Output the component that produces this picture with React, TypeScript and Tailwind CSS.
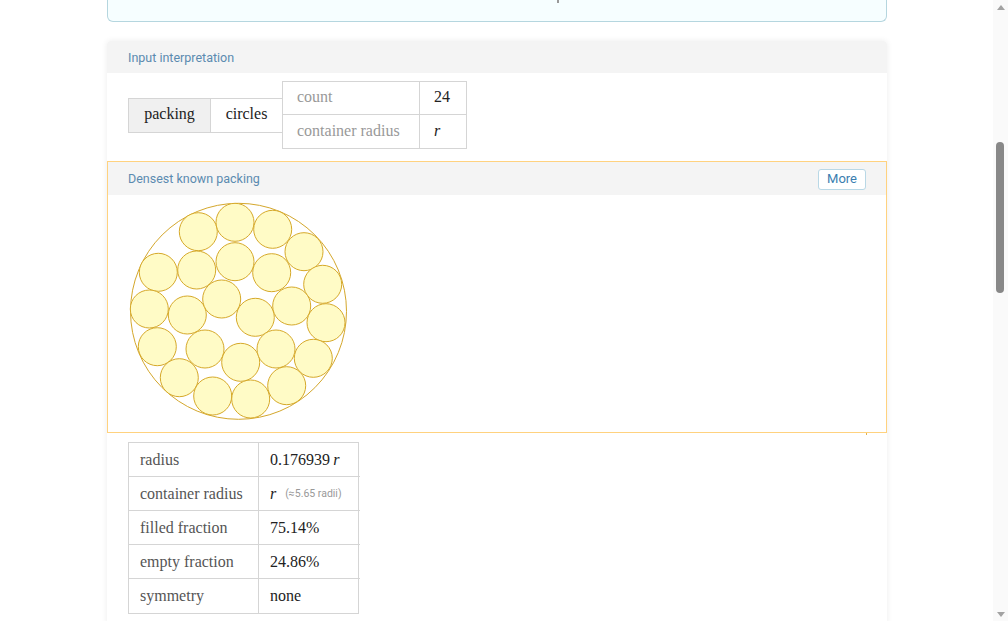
import React from "react";

const circles: [number, number][] = [
  [198.3, 231.7], [235, 222.3], [272.7, 229.3], [304, 251.7],
  [158.3, 272.3], [196.7, 270], [235, 261.7], [271.7, 272.7], [322.7, 284.3],
  [149.3, 309], [187.3, 315], [221.7, 299], [255.3, 317.3], [291.7, 306], [326, 322.7],
  [157.3, 346.7], [205, 349], [240.7, 362.3], [276, 349], [313.3, 358.3],
  [179.3, 377.7], [212.7, 396], [250.7, 399], [286.7, 385.7],
];

const serif = { fontFamily: '"Liberation Serif", "Times New Roman", serif' };

function Packing() {
  const ox = 128;
  const oy = 198;
  return (
    <svg width="230" height="228" viewBox="0 0 230 228" className="block">
      <circle cx={238.5 - ox} cy={311.3 - oy} r={108} fill="none" stroke="#d4a72c" strokeWidth="1" />
      {circles.map(([x, y], i) => (
        <circle key={i} cx={x - ox} cy={y - oy} r={19} fill="#fffbc6" stroke="#d6a92a" strokeWidth="1" />
      ))}
    </svg>
  );
}

export default function App() {
  return (
    <div className="w-[1008px] h-[621px] overflow-hidden flex bg-white" style={{ fontFamily: 'Roboto, "Liberation Sans", sans-serif' }}>
      <div className="w-[993px] h-full">
        <div className="ml-[107px] w-[780px]">
          <div className="h-[22px] bg-[#f6feff] border-x border-b border-[#b5d6df] rounded-b-[6px] relative">
            <div className="absolute left-[449px] top-0 w-[2px] h-[3px] bg-[#999]" />
          </div>
          <div className="mt-[19px] bg-white shadow-[0_0_6px_rgba(0,0,0,0.08)] rounded-t-[4px]">
            <div className="h-[32px] bg-[#f4f4f4] flex items-center pt-[3px] px-[21px] text-[12.5px] text-[#5b8bb0] rounded-t-[4px]">
              Input interpretation
            </div>
            <div className="h-[88px] pt-[8px] pl-[21px] text-[16px] text-[#222]" style={serif}>
              <div className="flex items-center">
                <div className="h-[35px] w-[83px] pb-[2px] flex items-center justify-center bg-[#f0f0f0] border border-[#d5d5d5]">packing</div>
                <div className="h-[35px] w-[71px] pb-[2px] flex items-center justify-center border-y border-[#d5d5d5]">circles</div>
                <div className="grid grid-cols-[137px_46px] border border-[#d5d5d5]">
                  <div className="h-[33px] pb-[2px] flex items-center pl-[14px] text-[#999] border-r border-b border-[#d5d5d5]">count</div>
                  <div className="h-[33px] pb-[2px] flex items-center pl-[14px] border-b border-[#d5d5d5]">24</div>
                  <div className="h-[33px] pb-[2px] flex items-center pl-[14px] text-[#999] border-r border-[#d5d5d5]">container radius</div>
                  <div className="h-[33px] pb-[2px] flex items-center pl-[14px] italic">r</div>
                </div>
              </div>
            </div>
            <div className="border border-[#ffd27f]">
              <div className="h-[33px] bg-[#f4f4f4] flex items-center justify-between pt-[1px] pl-[20px] pr-[20px] text-[12.5px] text-[#5b8bb0]">
                <span>Densest known packing</span>
                <span className="h-[21px] px-[8px] flex items-center border border-[#b9d8e6] rounded-[3px] bg-white text-[13px] text-[#3a7eb0]">More</span>
              </div>
              <div className="h-[237px] pl-[20px] pt-[3px]">
                <Packing />
              </div>
            </div>
            <div className="relative">
              <div className="absolute right-[20px] top-0 w-[1px] h-[2px] bg-[#e3b34a]" />
            </div>
            <div className="pl-[21px] pt-[9px] pb-[10px] text-[16px] text-[#222]" style={serif}>
              <div className="grid grid-cols-[130px_101px] w-[231px] border border-[#d5d5d5]">
                {[
                  ["radius", <span key="a">0.176939<span className="italic">&thinsp;r</span></span>],
                  ["container radius", <span key="b" className="flex items-center"><span className="italic">r</span><span className="ml-[9px] text-[10.5px] text-[#999]" style={{ fontFamily: 'Roboto, "Liberation Sans", sans-serif' }}>(≈5.65 radii)</span></span>],
                  ["filled fraction", "75.14%"],
                  ["empty fraction", "24.86%"],
                  ["symmetry", "none"],
                ].map(([k, v], i, arr) => (
                  <React.Fragment key={i}>
                    <div className={`h-[34px] flex items-center pl-[11px] text-[#555] border-r border-[#d5d5d5] ${i < arr.length - 1 ? "border-b" : ""}`}>{k}</div>
                    <div className={`h-[34px] flex items-center pl-[11px] border-[#d5d5d5] ${i < arr.length - 1 ? "border-b" : ""}`}>{v}</div>
                  </React.Fragment>
                ))}
              </div>
            </div>
          </div>
        </div>
      </div>
      <div className="w-[15px] h-full bg-[#fafafa] relative">
        <div className="absolute left-[4px] top-[5px] w-0 h-0 border-l-[4px] border-r-[4px] border-b-[5px] border-l-transparent border-r-transparent border-b-[#a3a3a3]" />
        <div className="absolute left-[3px] top-[142px] w-[8px] h-[151px] rounded-[4px] bg-[#888]" />
        <div className="absolute left-[4px] bottom-[4px] w-0 h-0 border-l-[4px] border-r-[4px] border-t-[5px] border-l-transparent border-r-transparent border-t-[#a3a3a3]" />
      </div>
    </div>
  );
}
